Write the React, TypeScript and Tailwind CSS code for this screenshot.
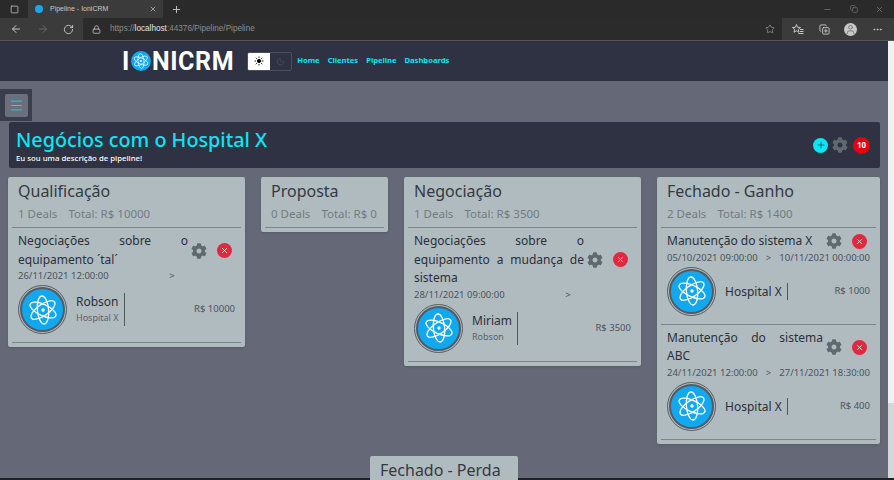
import { ArrowLeft, ArrowRight, Copy, CopyPlus, Lock, Menu, Minus, Moon, MoreHorizontal, Plus, RotateCw, Square, Star, Sun, User, X } from "lucide-react";
import { FaCog } from "react-icons/fa";

type Deal = {
  title: string;
  start: string;
  end: string;
  name: string;
  sub?: string;
  value: string;
};

type Stage = {
  name: string;
  count: string;
  total: string;
  width: string;
  deals: Deal[];
};

const STAGES: Stage[] = [
  {
    name: "Qualificação",
    count: "1 Deals",
    total: "Total: R$ 10000",
    width: "w-[237px]",
    deals: [
      { title: "Negociações sobre o equipamento ´tal´", start: "26/11/2021 12:00:00", end: "", name: "Robson", sub: "Hospital X", value: "R$ 10000" },
    ],
  },
  { name: "Proposta", count: "0 Deals", total: "Total: R$ 0", width: "w-[127px]", deals: [] },
  {
    name: "Negociação",
    count: "1 Deals",
    total: "Total: R$ 3500",
    width: "w-[237px]",
    deals: [
      { title: "Negociações sobre o equipamento a mudança de sistema", start: "28/11/2021 09:00:00", end: "", name: "Miriam", sub: "Robson", value: "R$ 3500" },
    ],
  },
  {
    name: "Fechado - Ganho",
    count: "2 Deals",
    total: "Total: R$ 1400",
    width: "w-[223px]",
    deals: [
      { title: "Manutenção do sistema X", start: "05/10/2021 09:00:00", end: "10/11/2021 00:00:00", name: "Hospital X", value: "R$ 1000" },
      { title: "Manutenção do sistema ABC", start: "24/11/2021 12:00:00", end: "27/11/2021 18:30:00", name: "Hospital X", value: "R$ 400" },
    ],
  },
];

function AtomMark({ size }: { size: number }) {
  return (
    <svg width={size} height={size} viewBox="0 0 32 32" fill="none" stroke="white" strokeWidth="1.4">
      <ellipse cx="16" cy="16" rx="15" ry="6" transform="rotate(25 16 16)" />
      <ellipse cx="16" cy="16" rx="15" ry="6" transform="rotate(85 16 16)" />
      <ellipse cx="16" cy="16" rx="15" ry="6" transform="rotate(145 16 16)" />
      <circle cx="16" cy="16" r="1.8" fill="white" stroke="none" />
    </svg>
  );
}

// Favoris du navigateur : étoile + lignes
function FavoritesIcon() {
  return (
    <svg className="ml-[10px] h-[12px] w-[12px]" viewBox="0 0 24 24" fill="none" stroke="currentColor" strokeWidth="2" strokeLinejoin="round">
      <path d="M9 3l2.2 5.6 5.8.4-4.5 3.8 1.5 5.7L9 15.5 4 18.5l1.5-5.7L1 9l5.8-.4z" />
      <path d="M16 13h7M16 17h7M13 21h10" />
    </svg>
  );
}

function Avatar() {
  return (
    <div className="flex h-[49px] w-[49px] shrink-0 items-center justify-center rounded-full border border-[#555c62]">
      <div className="flex h-[45px] w-[45px] items-center justify-center rounded-full border-[2.5px] border-[#555b60] bg-[#12a8f0]">
        <AtomMark size={30} />
      </div>
    </div>
  );
}

function DealCard({ deal }: { deal: Deal }) {
  return (
    <div className="border-b border-[#7c858b] px-1.5 pb-[8px] pt-[4px]">
      <div className="flex items-center">
        <p className="min-w-0 flex-1 text-justify text-[12px] leading-[18.5px] text-[#2b3036]">{deal.title}</p>
        <div className="ml-[3px] mr-[3px] flex shrink-0 items-center gap-[10px]">
          <FaCog className="h-[16px] w-[16px] text-[#5f6a70]" />
          <span className="flex h-[15px] w-[15px] items-center justify-center rounded-full bg-[#e0293f]">
            <X className="h-[9px] w-[9px] text-white" strokeWidth={2} />
          </span>
        </div>
      </div>
      <div className="mb-[2px] flex justify-between whitespace-nowrap text-[9.5px] leading-[14px] text-[#4b5359]">
        <span>{deal.start}</span>
        <span>&gt;</span>
        <span>{deal.end}</span>
      </div>
      <div className="flex items-center">
        <Avatar />
        <div className="ml-[9px] border-r border-[#4f565c] pr-[5px]">
          <p className="text-[12px] leading-[17px] text-[#2b3036]">{deal.name}</p>
          {deal.sub && <p className="text-[9px] leading-[16px] text-[#5b6369]">{deal.sub}</p>}
        </div>
        <span className="ml-auto text-[9.5px] text-[#4b5359]">{deal.value}</span>
      </div>
    </div>
  );
}

function StageColumn({ stage }: { stage: Stage }) {
  return (
    <section className={`${stage.width} self-start rounded-[2px] bg-[#b0bbc0] px-1 pb-[4px] shadow-sm`}>
      <div className="border-b border-[#7c858b] px-1.5 pb-[4px] pt-[2px]">
        <h2 className="whitespace-nowrap text-[16px] leading-[24px] text-[#343a40]">{stage.name}</h2>
        <p className="mt-[2px] flex gap-[11px] whitespace-nowrap text-[11.5px] leading-[18px] text-[#727b81]">
          <span>{stage.count}</span>
          <span>{stage.total}</span>
        </p>
      </div>
      {stage.deals.map((deal) => (
        <DealCard key={deal.title} deal={deal} />
      ))}
    </section>
  );
}

function BrowserChrome() {
  return (
    <div className="font-['Liberation_Sans',sans-serif] text-[#c8c8c8]">
      <div className="flex h-[18px] items-center bg-[#2a2a2a]">
        <div className="flex w-[28px] justify-center">
          <Square className="h-[9px] w-[9px]" />
        </div>
        <div className="flex h-full w-[135px] items-center bg-[#3b3b3b] pl-[7px] pr-[6px] text-[7px]">
          <span className="mr-[7px] h-[8px] w-[8px] rounded-full bg-[#1ba5ec]" />
          <span className="flex-1">Pipeline - IoniCRM</span>
          <X className="h-[8px] w-[8px]" />
        </div>
        <Plus className="ml-[8px] h-[11px] w-[11px]" />
        <div className="ml-auto flex items-center gap-[17.5px] pr-[10px] text-[#777]">
          <Minus className="h-[9px] w-[9px]" />
          <Copy className="h-[8px] w-[8px]" />
          <X className="h-[9px] w-[9px]" />
        </div>
      </div>
      <div className="flex h-[23px] items-center border-b border-[#555] bg-[#3b3b3b]">
        <ArrowLeft className="ml-[10px] h-[12px] w-[12px]" />
        <ArrowRight className="ml-[15px] h-[12px] w-[12px] text-[#666]" />
        <RotateCw className="ml-[14px] h-[11px] w-[11px]" />
        <div className="ml-[9px] flex h-full w-[699px] items-center bg-[#2b2b2b] pl-[9px] text-[8.2px] text-[#8d8d8d]">
          <Lock className="mr-[9px] h-[9px] w-[9px] text-[#c8c8c8]" />
          <span>https://</span>
          <span className="text-[#e4e4e4]">localhost</span>
          <span>:44376/Pipeline/Pipeline</span>
          <Star className="ml-auto mr-[7px] h-[10px] w-[10px]" />
        </div>
        <FavoritesIcon />
        <CopyPlus className="ml-[15px] h-[11px] w-[11px]" />
        <span className="ml-[14px] flex h-[13px] w-[13px] items-center justify-center overflow-hidden rounded-full bg-[#c8c8c8]">
          <User className="h-[11px] w-[11px] text-[#777]" />
        </span>
        <MoreHorizontal className="ml-[15px] h-[11px] w-[11px]" />
      </div>
    </div>
  );
}

export default function App() {
  return (
    <div className="flex h-[480px] w-[894px] flex-col overflow-hidden bg-[#656876] font-['Noto_Sans',sans-serif]">
      <BrowserChrome />
      <div className="flex min-h-0 flex-1">
        <div className="relative min-w-0 flex-1">
          <nav className="flex h-[40px] items-center bg-[#2f3242] pl-[122px]">
            <div className="flex items-center font-['Roboto',sans-serif] text-[25px] font-bold leading-none tracking-[0.6px] text-white">
              <span>I</span>
              <span className="mx-[1px] flex h-[20px] w-[20px] items-center justify-center rounded-full bg-[#12a8f0]">
                <AtomMark size={16} />
              </span>
              <span>NICRM</span>
            </div>
            <div className="ml-[13px] flex h-[19px] w-[45px] overflow-hidden rounded-[2px] border border-[#4b4e5c]">
              <span className="flex w-[22px] items-center justify-center bg-white">
                <Sun className="h-[10px] w-[10px] fill-black text-black" />
              </span>
              <span className="flex flex-1 items-center justify-center">
                <Moon className="h-[9px] w-[9px] text-[#4b4e5c]" />
              </span>
            </div>
            <div className="ml-[5px] flex gap-[8px] text-[7.6px] font-bold text-[#0de4f4]">
              <span>Home</span>
              <span>Clientes</span>
              <span>Pipeline</span>
              <span>Dashboards</span>
            </div>
          </nav>

          <div className="absolute left-0 top-[48px] flex h-[32px] w-[32px] items-center justify-center bg-[#3a3d4c]">
            <span className="flex h-[23px] w-[23px] items-center justify-center rounded-[2px] bg-[#6b6e7c]">
              <Menu className="h-[15px] w-[15px] text-[#19e0ee]" strokeWidth={1.3} />
            </span>
          </div>

          <main className="pl-2 pt-[41px]">
            <header className="ml-px flex h-[46px] w-[871px] items-center rounded-[2px] bg-[#2f3242] pl-[7px] pr-[10px]">
              <div>
                <h1 className="text-[19.75px] font-medium leading-[26px] text-[#0de4f4]">Negócios com o Hospital X</h1>
                <p className="text-[7.8px] font-medium leading-[11px] text-white">Eu sou uma descrição de pipeline!</p>
              </div>
              <div className="ml-auto flex items-center gap-[4px]">
                <span className="flex h-[15px] w-[15px] items-center justify-center rounded-full bg-[#0de4f4]">
                  <Plus className="h-[10px] w-[10px] text-[#2f3242]" strokeWidth={1.5} />
                </span>
                <FaCog className="h-[16px] w-[16px] text-[#5f6a70]" />
                <span className="ml-[1px] flex h-[17px] w-[17px] items-center justify-center rounded-full bg-[#e5000f] text-[8px] font-bold text-white">
                  10
                </span>
              </div>
            </header>

            <div className="mt-[9px] flex w-[872px] flex-wrap justify-center gap-x-4 gap-y-3">
              {STAGES.map((stage) => (
                <StageColumn key={stage.name} stage={stage} />
              ))}
              <section className="w-[148px] rounded-[2px] bg-[#b0bbc0] px-1 pb-[4px]">
                <h2 className="px-1.5 pt-[2px] text-[16px] leading-[24px] text-[#343a40]">Fechado - Perda</h2>
              </section>
            </div>
          </main>
        </div>
        <div className="flex w-[6px] flex-col bg-[#d5d6da]">
          <div className="h-[362px] bg-[#f1f1f1]" />
        </div>
      </div>
      <div className="h-[2px] bg-[#222]" />
    </div>
  );
}
